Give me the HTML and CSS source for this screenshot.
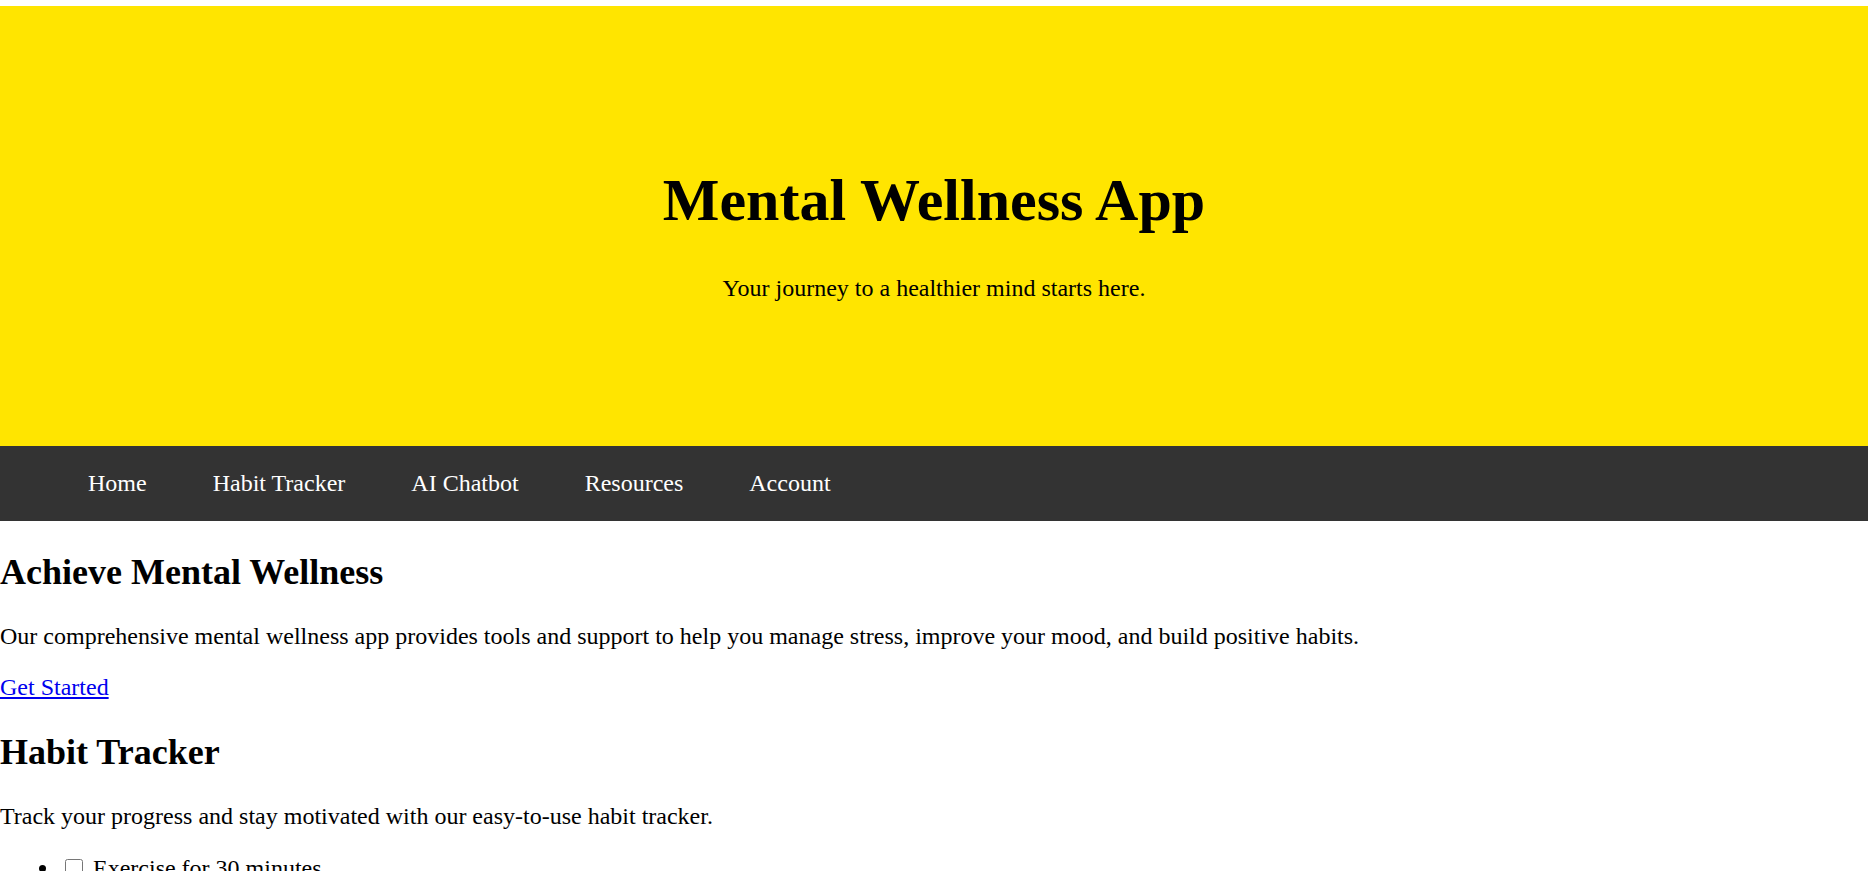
FILE: index.html
```html
<!DOCTYPE html>
<html lang="en">
<head>
<meta charset="utf-8">
<title>Mental Wellness App</title>
<link rel="stylesheet" href="styles.css">
</head>
<body>
  <header class="hero">
    <h1 class="hero-title">Mental Wellness App</h1>
    <p class="hero-sub">Your journey to a healthier mind starts here.</p>
  </header>
  <nav class="nav">
    <a class="nav-link" href="#">Home</a>
    <a class="nav-link" href="#">Habit Tracker</a>
    <a class="nav-link" href="#">AI Chatbot</a>
    <a class="nav-link" href="#">Resources</a>
    <a class="nav-link" href="#">Account</a>
  </nav>
  <main class="main">
    <section class="section">
      <h2 class="section-title">Achieve Mental Wellness</h2>
      <p class="text">Our comprehensive mental wellness app provides tools and support to help you manage stress, improve your mood, and build positive habits.</p>
      <p class="text"><a class="link" href="#">Get Started</a></p>
    </section>
    <section class="section">
      <h2 class="section-title">Habit Tracker</h2>
      <p class="text">Track your progress and stay motivated with our easy-to-use habit tracker.</p>
      <ul class="habits">
        <li class="habit"><input class="check" type="checkbox"> Exercise for 30 minutes</li>
        <li class="habit"><input class="check" type="checkbox"> Meditate for 10 minutes</li>
        <li class="habit"><input class="check" type="checkbox"> Drink 8 glasses of water</li>
      </ul>
    </section>
  </main>
</body>
</html>
```
FILE: styles.css
```css
html {
  overflow: hidden;
}

body {
  margin: 6px 5px 0 0;
  font-family: "Liberation Serif", "Times New Roman", serif;
  font-size: 24px;
  color: #000;
  background: #fff;
}

.hero {
  background: #ffe500;
  padding: 120px 0;
  text-align: center;
}

.hero-title {
  font-size: 60px;
  font-weight: bold;
  margin: 40px 0;
}

.hero-sub {
  margin: 24px 0;
}

.nav {
  background: #333333;
  height: 75px;
  display: flex;
  align-items: center;
  gap: 66px;
  padding-left: 88px;
}

.nav-link {
  color: #fff;
  text-decoration: none;
}

.section-title {
  font-size: 36px;
  margin: 30px 0;
}

.text {
  margin: 24px 0;
}

.link {
  color: #0000ee;
}

.habits {
  margin: 25px 0;
  padding-left: 60px;
}

.check {
  width: 18px;
  height: 18px;
  margin: 0 4px 0 5px;
  vertical-align: -1px;
}
```
